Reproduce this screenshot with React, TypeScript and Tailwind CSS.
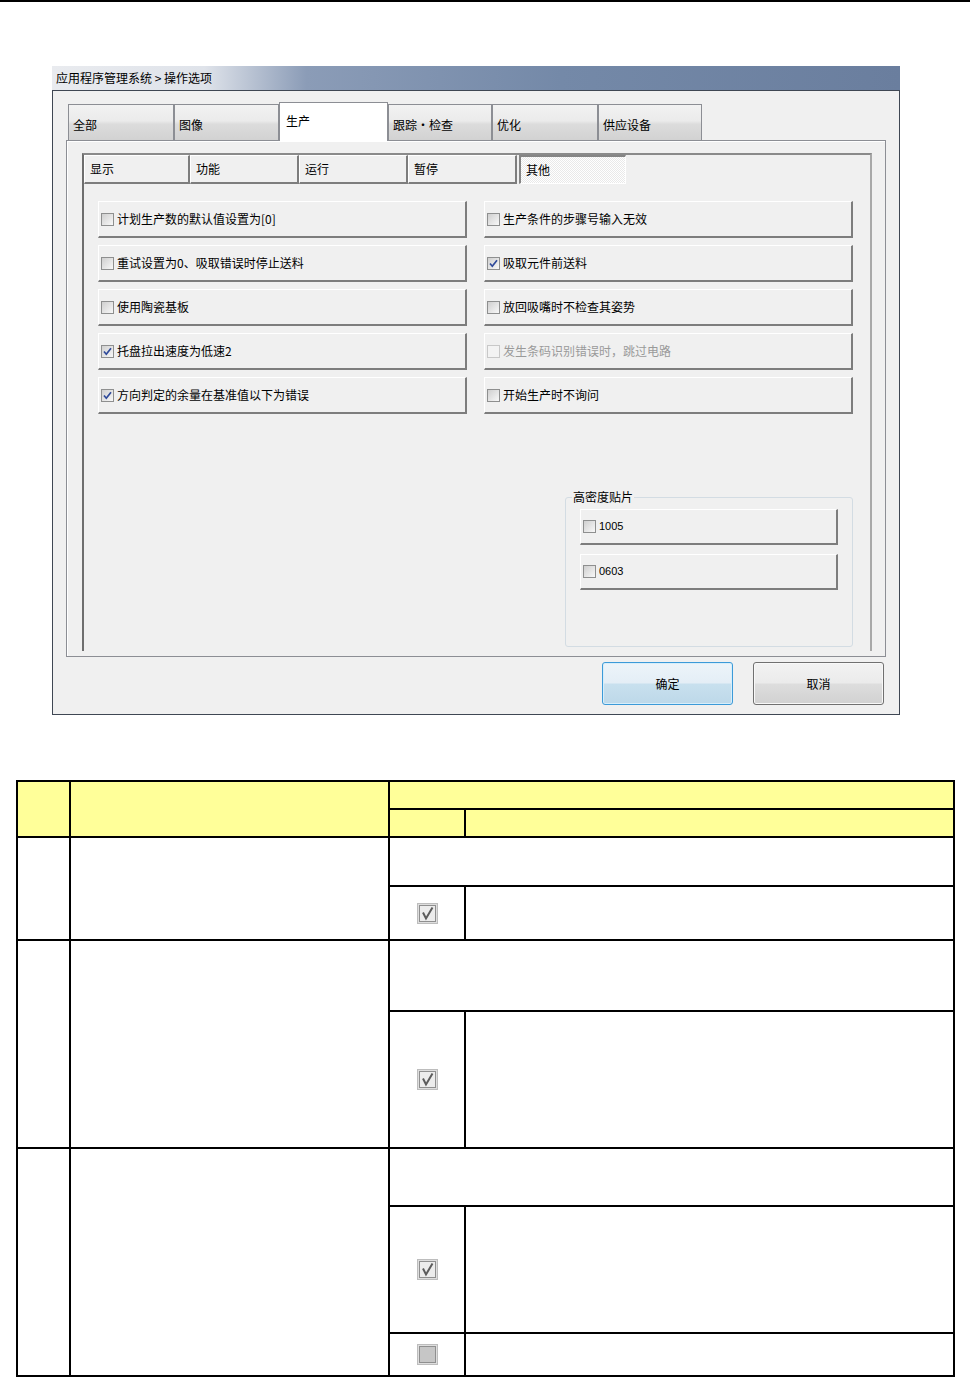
import React from 'react';

type Opt = { label: string; checked?: boolean; disabled?: boolean };

const mainTabs = [
  { label: '全部', w: 'w-[106px]' },
  { label: '图像', w: 'w-[105px]' },
  { label: '生产', w: 'w-[109px]', active: true },
  { label: '跟踪·检查', w: 'w-[104px]' },
  { label: '优化', w: 'w-[106px]' },
  { label: '供应设备', w: 'w-[104px]' },
];

const subTabs = [
  { label: '显示', w: 'w-[106px]' },
  { label: '功能', w: 'w-[109px]' },
  { label: '运行', w: 'w-[109px]' },
  { label: '暂停', w: 'w-[109px]' },
];

const leftOpts: Opt[] = [
  { label: '计划生产数的默认值设置为[0]' },
  { label: '重试设置为0、吸取错误时停止送料' },
  { label: '使用陶瓷基板' },
  { label: '托盘拉出速度为低速2', checked: true },
  { label: '方向判定的余量在基准值以下为错误', checked: true },
];

const rightOpts: Opt[] = [
  { label: '生产条件的步骤号输入无效' },
  { label: '吸取元件前送料', checked: true },
  { label: '放回吸嘴时不检查其姿势' },
  { label: '发生条码识别错误时，跳过电路', disabled: true },
  { label: '开始生产时不询问' },
];

function Box({ checked, disabled }: { checked?: boolean; disabled?: boolean }) {
  return (
    <span
      className={`flex h-[13px] w-[13px] shrink-0 items-center justify-center border ${
        disabled
          ? 'border-[#c8c8c8] bg-[#f3f3f3]'
          : 'border-[#8e8f8f] bg-[linear-gradient(135deg,#cfcfcf,#f8f8f8)]'
      }`}
    >
      {checked && (
        <svg width="11" height="11" viewBox="0 0 11 11">
          <path d="M2 5.5 L4.3 8.2 L9 2.2" fill="none" stroke="#2f4a9a" strokeWidth="1.7" />
        </svg>
      )}
    </span>
  );
}

function OptRow({ label, checked, disabled }: Opt) {
  return (
    <div className="flex h-[37px] items-center gap-[3px] border-t border-l border-t-white border-l-white border-b-2 border-r-2 border-b-[#7d7d7d] border-r-[#7d7d7d] pl-[2px]">
      <Box checked={checked} disabled={disabled} />
      <span className={`text-[12px] leading-none ${disabled ? 'text-[#9a9a9a]' : 'text-black'}`}>{label}</span>
    </div>
  );
}

function SizeRow({ label }: { label: string }) {
  return (
    <div className="ml-[8px] flex h-[36px] w-[258px] items-center gap-[3px] border-t border-l border-t-white border-l-white border-b-2 border-r-2 border-b-[#7d7d7d] border-r-[#7d7d7d] pl-[2px]">
      <Box />
      <span className="font-['Liberation_Sans',sans-serif] text-[11px] leading-none">{label}</span>
    </div>
  );
}

function DocCheck({ checked }: { checked?: boolean }) {
  return (
    <svg width="21" height="21" viewBox="0 0 21 21" className="mx-auto block">
      <rect x="0.5" y="0.5" width="20" height="20" fill="#dedede" stroke="#bdbdbd" />
      <rect x="2.5" y="2.5" width="16" height="16" fill={checked ? '#ececec' : '#c6c6c6'} stroke="#8f8f8f" />
      {checked && <path d="M6 9.5 L9 15.5 L15.5 4.5" fill="none" stroke="#5c5c5c" strokeWidth="2" />}
    </svg>
  );
}

export default function App() {
  return (
    <div className="min-h-[1377px] bg-white font-['Noto_Sans_CJK_SC','Noto_Sans',sans-serif] text-black">
      <div className="h-[2px] w-full bg-black" />

      {/* dialog window */}
      <div className="ml-[52px] mt-[64px] w-[848px]">
        <div className="flex h-[24px] items-center bg-[linear-gradient(to_right,#e9ebef_0%,#dfe3ea_18%,#8b9cb7_30%,#7489a8_60%,#6a7e9e_100%)] pl-[4px] text-[12px]">
          应用程序管理系统&nbsp;&gt;&nbsp;操作选项
        </div>
        <div className="h-[625px] border border-[#3f4753] bg-[#f0f0f0] pl-[13px] pt-[11px]">
          {/* main tabs */}
          <div className="ml-[2px] flex h-[38px] items-end">
            {mainTabs.map((t) =>
              t.active ? (
                <div
                  key={t.label}
                  className={`${t.w} relative z-10 -mb-px flex h-[39px] items-center border border-b-0 border-[#8c8e94] bg-white pb-[2px] pl-[6px] text-[12px]`}
                >
                  {t.label}
                </div>
              ) : (
                <div
                  key={t.label}
                  className={`${t.w} flex h-[36px] items-center border border-b-0 border-[#8c8e94] bg-[linear-gradient(to_bottom,#f2f2f2_0%,#ebebeb_45%,#dcdcdc_55%,#d2d2d2_100%)] pl-[4px] pt-[4px] text-[12px]`}
                >
                  {t.label}
                </div>
              )
            )}
          </div>

          {/* tab page */}
          <div className="h-[517px] w-[820px] border border-[#8c8e94] bg-[#f0f0f0] pl-[15px] pt-[12px] shadow-[inset_1px_1px_0_#ffffff]">
            <div className="h-[498px] w-[790px] border-t-2 border-l-2 border-r-2 border-t-[#8a8a8a] border-l-[#6e6e6e] border-r-[#a8a8a8]">
              {/* sub tabs */}
              <div className="flex h-[29px]">
                {subTabs.map((t) => (
                  <div
                    key={t.label}
                    className={`${t.w} flex items-center border-t border-l border-t-white border-l-white border-b-2 border-r-2 border-b-[#7d7d7d] border-r-[#7d7d7d] pl-[5px] text-[12px]`}
                  >
                    {t.label}
                  </div>
                ))}
                <div className="ml-[2px] flex w-[107px] items-center border-t-2 border-l-2 border-t-[#858585] border-l-[#858585] border-b border-r border-b-white border-r-white bg-[image:repeating-conic-gradient(#ffffff_0%_25%,#e9e9e9_0%_50%)] bg-[length:2px_2px] pl-[5px] text-[12px]">
                  其他
                </div>
              </div>

              <div className="ml-[14px] mt-[17px] grid grid-cols-[369px_369px] gap-x-[17px]">
                <div className="flex flex-col gap-[7px]">
                  {leftOpts.map((o) => (
                    <OptRow key={o.label} {...o} />
                  ))}
                </div>
                <div className="flex flex-col">
                  <div className="flex flex-col gap-[7px]">
                    {rightOpts.map((o) => (
                      <OptRow key={o.label} {...o} />
                    ))}
                  </div>
                  <fieldset className="ml-[81px] mt-[76px] h-[157px] w-[288px] rounded-[3px] border border-[#d3dce3] px-[6px]">
                    <legend className="px-[1px] text-[12px] leading-[14px]">高密度贴片</legend>
                    <div className="mt-[5px] flex flex-col gap-[9px]">
                      <SizeRow label="1005" />
                      <SizeRow label="0603" />
                    </div>
                  </fieldset>
                </div>
              </div>
            </div>
          </div>

          {/* buttons */}
          <div className="mt-[5px] flex w-[820px] justify-end gap-[20px] pr-[2px]">
            <button className="h-[43px] w-[131px] rounded-[3px] border border-[#3c9ad8] bg-[linear-gradient(to_bottom,#edf4f9_0%,#e4eef6_48%,#c8e0ee_52%,#bdd8e9_100%)] text-[12px] shadow-[inset_0_0_0_1px_#d6eefb]">
              确定
            </button>
            <button className="h-[43px] w-[131px] rounded-[3px] border border-[#707070] bg-[linear-gradient(to_bottom,#f2f2f2_0%,#ebebeb_48%,#dddddd_52%,#d1d1d1_100%)] text-[12px] shadow-[inset_0_0_0_1px_#f8f8f8]">
              取消
            </button>
          </div>
        </div>
      </div>

      {/* document table */}
      <table className="ml-[16px] mt-[65px] w-[937px] table-fixed border-collapse">
        <colgroup>
          <col className="w-[53px]" />
          <col className="w-[319px]" />
          <col className="w-[76px]" />
          <col className="w-[489px]" />
        </colgroup>
        <tbody>
          <tr className="h-[28px]">
            <td rowSpan={2} className="border-2 border-black bg-[#ffff99]" />
            <td rowSpan={2} className="border-2 border-black bg-[#ffff99]" />
            <td colSpan={2} className="border-2 border-black bg-[#ffff99]" />
          </tr>
          <tr className="h-[28px]">
            <td className="border-2 border-black bg-[#ffff99]" />
            <td className="border-2 border-black bg-[#ffff99]" />
          </tr>

          <tr className="h-[49px]">
            <td rowSpan={2} className="border-2 border-black" />
            <td rowSpan={2} className="border-2 border-black" />
            <td colSpan={2} className="border-2 border-black" />
          </tr>
          <tr className="h-[54px]">
            <td className="border-2 border-black">
              <DocCheck checked />
            </td>
            <td className="border-2 border-black" />
          </tr>

          <tr className="h-[71px]">
            <td rowSpan={2} className="border-2 border-black" />
            <td rowSpan={2} className="border-2 border-black" />
            <td colSpan={2} className="border-2 border-black" />
          </tr>
          <tr className="h-[137px]">
            <td className="border-2 border-black">
              <DocCheck checked />
            </td>
            <td className="border-2 border-black" />
          </tr>

          <tr className="h-[58px]">
            <td rowSpan={3} className="border-2 border-black" />
            <td rowSpan={3} className="border-2 border-black" />
            <td colSpan={2} className="border-2 border-black" />
          </tr>
          <tr className="h-[127px]">
            <td className="border-2 border-black">
              <DocCheck checked />
            </td>
            <td className="border-2 border-black" />
          </tr>
          <tr className="h-[43px]">
            <td className="border-2 border-black">
              <DocCheck />
            </td>
            <td className="border-2 border-black" />
          </tr>
        </tbody>
      </table>
    </div>
  );
}
